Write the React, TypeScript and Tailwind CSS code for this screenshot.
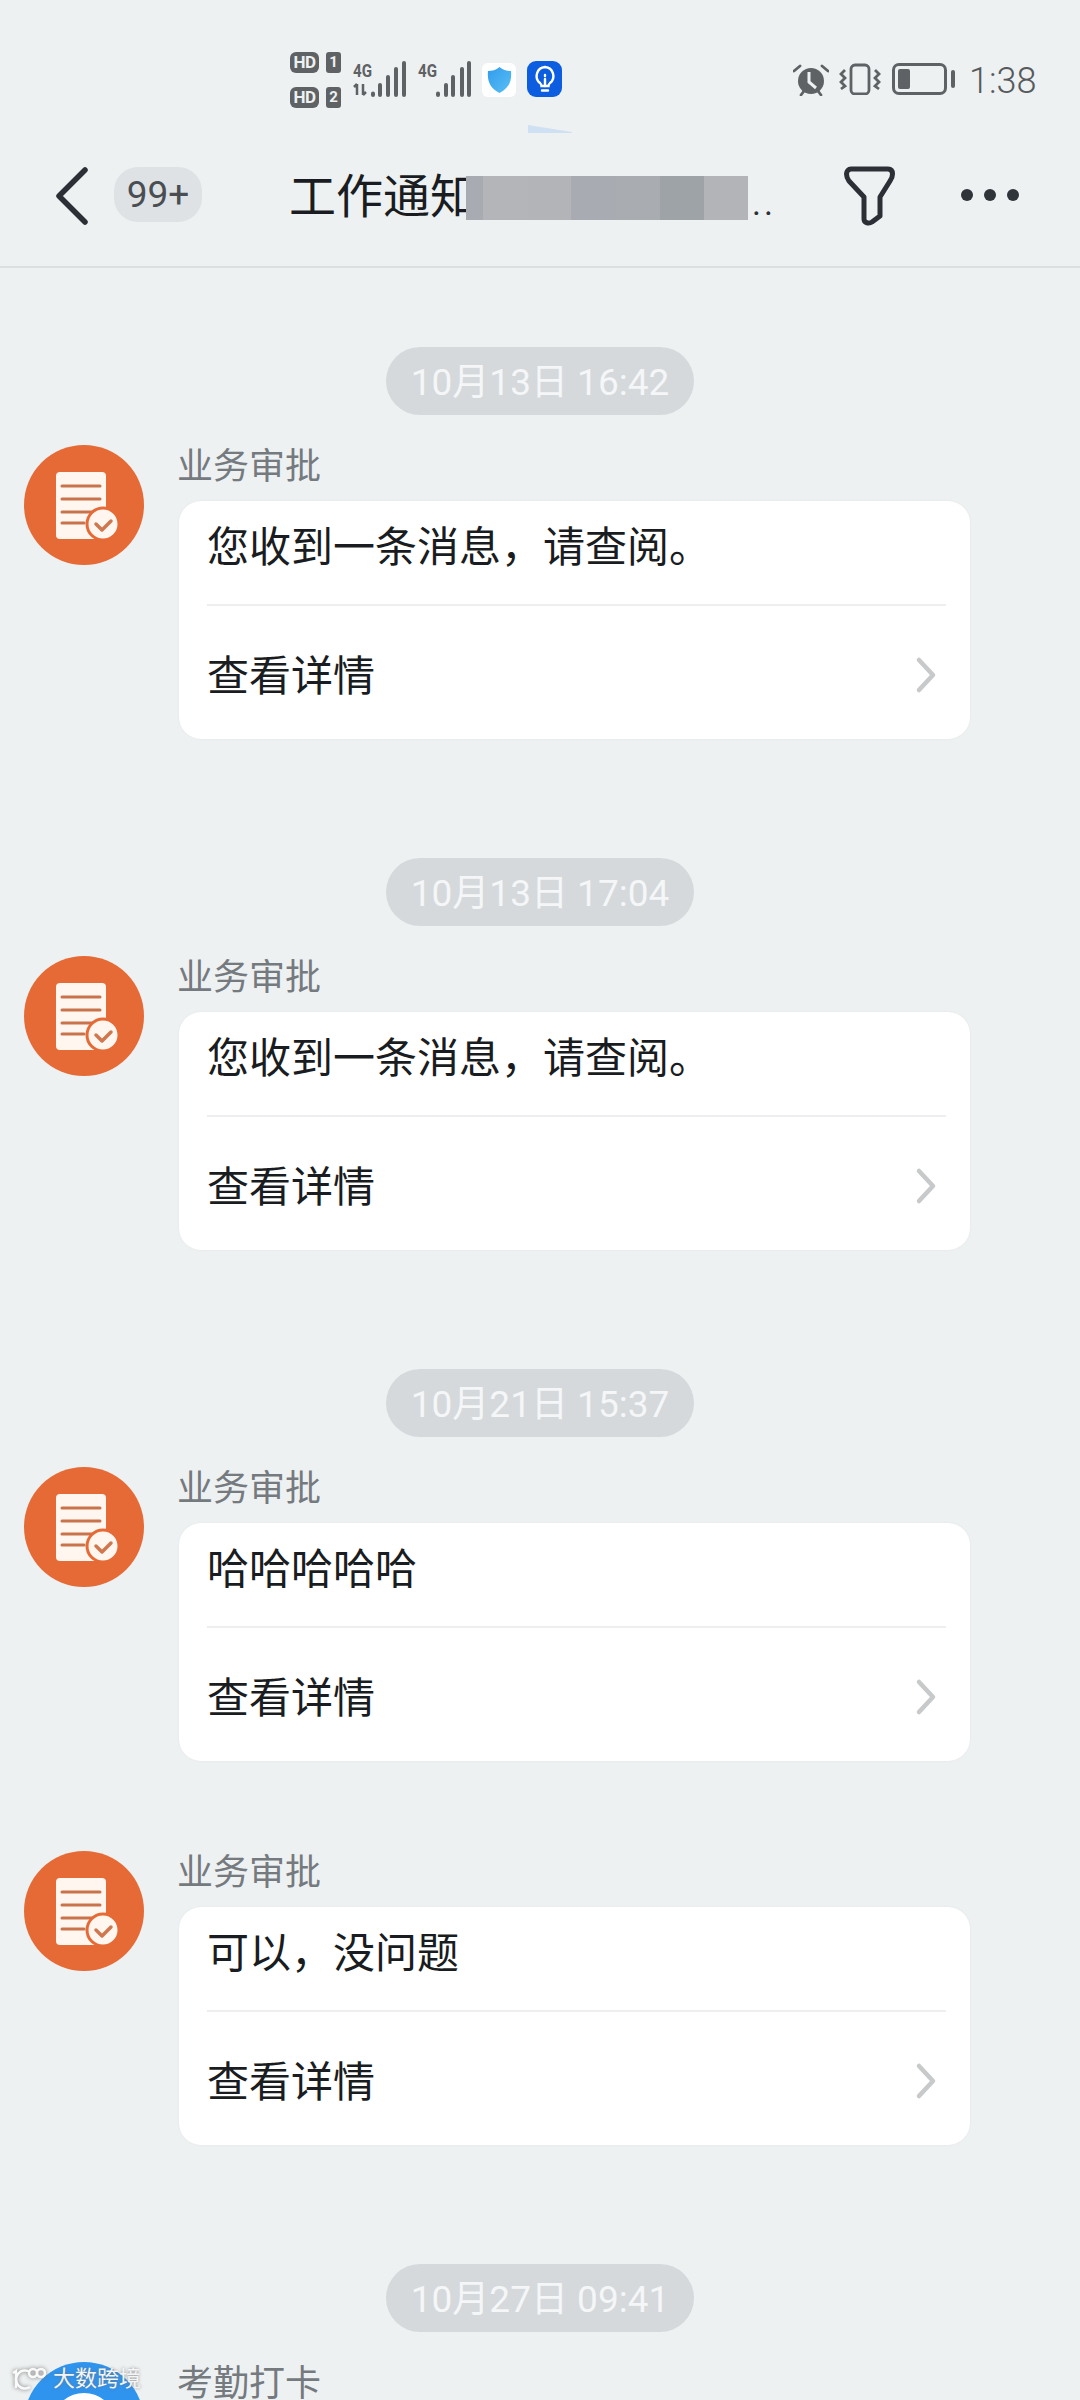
function Avatar() {
  return (
    <div className="w-[120px] h-[120px] rounded-full bg-[#e66a35] shrink-0">
      <svg width="120" height="120" viewBox="0 0 120 120">
        <rect x="32" y="27" width="50" height="67" rx="4" fill="#fff6ef" />
        <g stroke="#c9734d" strokeWidth="3" strokeLinecap="round">
          <path d="M38 41h38M38 54h38M38 67h38M38 78h22" />
        </g>
        <circle cx="79" cy="79" r="16" fill="#fff6ef" stroke="#e66a35" strokeWidth="3" />
        <path d="M72 79l6 6 9-9" fill="none" stroke="#d0774f" strokeWidth="3.5" strokeLinecap="round" strokeLinejoin="round" />
      </svg>
    </div>
  );
}

function Stamp({ time, className = "" }: { time: string; className?: string }) {
  return (
    <div className={`flex justify-center ${className}`}>
      <div className="h-[68px] w-[308px] pt-[3px] rounded-full bg-[#d5d9dc] flex items-center justify-center text-[#f4f6f7] text-[37px] leading-none">
        {time}
      </div>
    </div>
  );
}

function Msg({ text, className = "" }: { text: string; className?: string }) {
  return (
    <div className={`flex pl-6 ${className}`}>
      <Avatar />
      <div className="ml-[35px] w-[791px]">
        <div className="h-[56px] pl-[0px] -ml-[2px] text-[36px] leading-[44px] text-[#757a7f]">业务审批</div>
        <div className="h-[238px] bg-white rounded-[22px] pl-[28px] pr-[24px] shadow-[0_0_2px_#dfe3e6]">
          <div className="h-[105px] border-b-2 border-[#eeeef0] text-[42px] leading-[93px] text-[#191c20]">{text}</div>
          <div className="h-[133px] pt-[8px] flex items-center justify-between text-[42px] text-[#191c20]">
            <span>查看详情</span>
            <svg width="24" height="40" viewBox="0 0 24 40" className="mr-[8px] -mt-[3px]">
              <path d="M5 5l14 15L5 35" fill="none" stroke="#c8c9ca" strokeWidth="4.5" strokeLinecap="round" strokeLinejoin="round" />
            </svg>
          </div>
        </div>
      </div>
    </div>
  );
}

function Signals() {
  return (
    <svg width="124" height="40" viewBox="0 0 124 40" className="ml-[11px] mt-[60px] shrink-0">
      <g fill="#5f6265" fontSize="18" fontWeight="700">
        <text x="1" y="17" textLength="19" lengthAdjust="spacingAndGlyphs">4G</text>
        <text x="66" y="17" textLength="19" lengthAdjust="spacingAndGlyphs">4G</text>
      </g>
      <g stroke="#5f6265" strokeWidth="4" strokeLinecap="round">
        <path d="M21 33.500v1.500M28 25v10M36 17v18M44 9v26M52 3v32" />
        <path d="M86 33.500v1.500M94 25v10M101 17v18M110 9v26M117 3v32" />
      </g>
      <path d="M5 35V24M5 24l-3 3M11 24v11M11 35l3-3" stroke="#5f6265" strokeWidth="2.500" fill="none" />
    </svg>
  );
}

function HdRow({ n }: { n: string }) {
  return (
    <div className="flex h-[21px]">
      <span className="w-[29px] rounded-[6px] bg-[#5f6265] text-[#eef1f2] text-[17px] font-bold leading-[21px] text-center tracking-[-0.5px]">HD</span>
      <span className="ml-[7px] w-[15px] rounded-[3px] bg-[#5f6265] text-[#eef1f2] text-[15px] font-bold leading-[21px] text-center">{n}</span>
    </div>
  );
}

function StatusBar() {
  return (
    <div className="h-[130px] relative shrink-0 flex items-start pl-[290px]">
      <div className="flex flex-col gap-[14px] mt-[52px] w-[51px] shrink-0">
        <HdRow n="1" />
        <HdRow n="2" />
      </div>
      <Signals />
      <div className="ml-[6px] mt-[63px] w-[34px] h-[34px] rounded-[6px] bg-white flex items-center justify-center shrink-0">
        <svg width="27" height="30" viewBox="0 0 27 30">
          <defs>
            <linearGradient id="sh" x1="0" y1="0" x2="1" y2="1">
              <stop offset="0" stopColor="#2f9bec" />
              <stop offset="1" stopColor="#5cc0f5" />
            </linearGradient>
          </defs>
          <path d="M13.500 2C17 5 21 6 25 6c1 10-2 17-11.500 22C4 23 1 16 2 6c4 0 8-1 11.500-4z" fill="url(#sh)" />
        </svg>
      </div>
      <div className="ml-[11px] mt-[61px] w-[35px] h-[36px] rounded-[9px] bg-[#0d5de0] flex items-center justify-center shrink-0">
        <svg width="24" height="30" viewBox="0 0 24 30" fill="none" stroke="#fff" strokeWidth="2.400" strokeLinecap="round">
          <path d="M12 3a9 9 0 0 0-5 16c1 1 1.500 2 1.500 3h7c0-1 .5-2 1.500-3a9 9 0 0 0-5-16z" />
          <path d="M9 26.500h6M12 22v-7M12 11v1" />
        </svg>
      </div>
      <svg width="36" height="32" viewBox="0 0 36 32" className="ml-[231px] mt-[64px] shrink-0">
        <circle cx="18" cy="17" r="13" fill="#5f6265" />
        <path d="M16 8v10l7 6" fill="none" stroke="#eef1f2" strokeWidth="3" />
        <path d="M1 7l6-5M35 7l-6-5M8 31l3-4M28 31l-3-4" stroke="#5f6265" strokeWidth="2.800" strokeLinecap="round" />
      </svg>
      <svg width="44" height="32" viewBox="0 0 44 32" fill="none" stroke="#5f6265" className="ml-[9px] mt-[63px] shrink-0">
        <rect x="13" y="2" width="18" height="29" rx="4" strokeWidth="2.800" />
        <path d="M7 7L3 11l4 4-4 4 4 4-4 3M37 7l4 4-4 4 4 4-4 4 4 3" strokeWidth="2.800" />
      </svg>
      <div className="ml-[10px] mt-[63px] w-[55px] h-[32px] border-[3px] border-[#5f6265] rounded-[7px] p-[3px] shrink-0">
        <div className="w-[12px] h-full bg-[#5f6265] rounded-[2px]" />
      </div>
      <div className="ml-[4px] mt-[70px] w-[4px] h-[18px] rounded-full bg-[#5f6265] shrink-0" />
      <div className="ml-[14px] mt-[58px] text-[36px] leading-[46px] font-light text-[#565a5d] shrink-0">1:38</div>
      <svg width="44" height="8" viewBox="0 0 44 8" className="absolute left-[528px] top-[125px]">
        <path d="M0 0l44 7v1H0z" fill="#cfe0f2" />
      </svg>
    </div>
  );
}

function Header() {
  return (
    <div className="h-[138px] border-b-2 border-[#dcdfe1] flex items-start relative shrink-0">
      <svg width="40" height="64" viewBox="0 0 40 64" className="ml-[50px] mt-[34px] shrink-0">
        <path d="M35 6L9 32l26 26" fill="none" stroke="#2c3036" strokeWidth="5.500" strokeLinecap="round" strokeLinejoin="round" />
      </svg>
      <div className="ml-[24px] mt-[37px] w-[88px] h-[55px] rounded-[24px] bg-[#dfe2e5] text-[#4a4e53] text-[37px] leading-[55px] text-center shrink-0">99+</div>
      <div className="ml-[87px] mt-[37px] text-[#191c20] text-[47px] leading-[60px] whitespace-nowrap shrink-0">工作通知</div>
      <div className="absolute left-[466px] top-[46px] w-[282px] h-[44px] flex">
        <div className="w-[17px] bg-[#a9abb2]" />
        <div className="w-[45px] bg-[#b3b5b9]" />
        <div className="w-[43px] bg-[#b2b4b8]" />
        <div className="w-[45px] bg-[#a8abb1]" />
        <div className="w-[44px] bg-[#a9acb1]" />
        <div className="w-[44px] bg-[#9ea3a8]" />
        <div className="flex-1 bg-[#b2b4b7]" />
      </div>
      <div className="absolute left-[752px] top-[56px] text-[#2c3036] text-[34px] leading-[34px] tracking-[3px]">..</div>
      <svg width="58" height="64" viewBox="0 0 58 64" className="ml-auto mt-[34px] shrink-0">
        <path d="M11 5h37c3 0 4.500 2 4.500 5 0 3-1 5-2.500 7L40 33v19l-8 6c-3 2-8 1-8-3V33L9 17C7.500 15 6.500 13 6.500 10c0-3 2-5 4.500-5z" fill="none" stroke="#2c3036" strokeWidth="5" strokeLinejoin="round" />
      </svg>
      <div className="ml-[63px] mr-[61px] mt-[59px] flex gap-[11px] shrink-0">
        <div className="w-[12px] h-[12px] rounded-full bg-[#2f333a]" />
        <div className="w-[12px] h-[12px] rounded-full bg-[#2f333a]" />
        <div className="w-[12px] h-[12px] rounded-full bg-[#2f333a]" />
      </div>
    </div>
  );
}

export default function App() {
  return (
    <div className="w-[1080px] h-[2400px] overflow-hidden bg-[#eef1f2] flex flex-col relative font-['Roboto','Noto_Sans_CJK_SC',sans-serif]">
      <StatusBar />
      <Header />
      <div className="pt-[79px] flex flex-col">
        <Stamp time="10月13日 16:42" />
        <Msg text="您收到一条消息，请查阅。" className="mt-[30px]" />
        <Stamp time="10月13日 17:04" className="mt-[119px]" />
        <Msg text="您收到一条消息，请查阅。" className="mt-[30px]" />
        <Stamp time="10月21日 15:37" className="mt-[119px]" />
        <Msg text="哈哈哈哈哈" className="mt-[30px]" />
        <Msg text="可以，没问题" className="mt-[90px]" />
        <Stamp time="10月27日 09:41" className="mt-[119px]" />
        <div className="flex pl-6 mt-[30px]">
          <div className="w-[120px] h-[120px] rounded-full bg-[#2f94ee] shrink-0 flex justify-center pt-[31px]">
            <div className="w-[64px] h-[64px] rounded-full border-[8px] border-white" />
          </div>
          <div className="ml-[33px] text-[36px] leading-[44px] text-[#757a7f]">考勤打卡</div>
        </div>
      </div>
      <div className="absolute left-[10px] top-[2366px] flex items-center">
        <svg width="36" height="24" viewBox="0 0 36 24" fill="none" stroke="#fafafa" strokeWidth="2.500" className="drop-shadow-[0_0_2px_#777777]">
          <path d="M3 6l3-2v17" />
          <path d="M20 5a9 9 0 1 0 0 15" />
          <circle cx="23" cy="6" r="4" />
          <circle cx="31" cy="6" r="4" />
        </svg>
        <span className="ml-[7px] text-[#f4f5f6] text-[22px] leading-[26px] [text-shadow:0_0_3px_rgba(110,110,110,0.8)]">大数跨境</span>
      </div>
    </div>
  );
}
